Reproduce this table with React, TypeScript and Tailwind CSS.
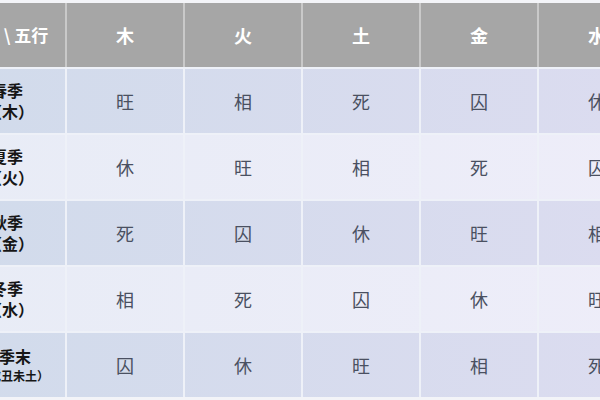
import React from "react";

const cols = ["木", "火", "土", "金", "水"];
const rows: { l1: string; l2: string; small?: boolean; cells: string[] }[] = [
  { l1: "春季", l2: "木", cells: ["旺", "相", "死", "囚", "休"] },
  { l1: "夏季", l2: "火", cells: ["休", "旺", "相", "死", "囚"] },
  { l1: "秋季", l2: "金", cells: ["死", "囚", "休", "旺", "相"] },
  { l1: "冬季", l2: "水", cells: ["相", "死", "囚", "休", "旺"] },
  { l1: "四季末", l2: "辰戌丑未土", small: true, cells: ["囚", "休", "旺", "相", "死"] },
];

export default function App() {
  return (
    <div
      className="w-[600px] h-[400px] overflow-hidden bg-[#f3f4f8] pt-[3px]"
      style={{ fontFamily: '"Noto Sans CJK SC", "Noto Sans", sans-serif' }}
    >
      <div className="ml-[-51px] flex flex-col gap-[2px] w-[720px] bg-[#eef1f8]">
        <div className="flex h-[64px] bg-[#a6a6a6]">
          <div className="w-[118px] border-r-2 border-[#c9c9c9] flex items-center justify-center text-white font-bold text-[17px] whitespace-pre">
            {"季节 \\ 五行"}
          </div>
          {cols.map((c) => (
            <div
              key={c}
              className="w-[118px] border-r-2 border-[#c9c9c9] flex items-center justify-center text-white font-bold text-[18px]"
            >
              {c}
            </div>
          ))}
        </div>
        {rows.map((r, i) => (
          <div
            key={r.l1}
            className={
              "flex h-[64px] " +
              (i % 2 === 0
                ? "bg-gradient-to-r from-[#d1dbeb] to-[#dcdcf0]"
                : "bg-gradient-to-r from-[#e8ecf6] to-[#eeedf9]")
            }
          >
            <div className="w-[118px] border-r-2 border-[#eef1f8] flex flex-col items-center justify-center text-[#161616] font-bold">
              <div className="text-[16px] leading-[21px]">{r.l1}</div>
              <div
                className={
                  r.small
                    ? "flex text-[12px] leading-[17px]"
                    : "flex text-[16px] leading-[21px] pl-[6px]"
                }
              >
                <span className="w-[1em] text-right">（</span>
                <span>{r.l2}</span>
                <span className="w-[1em] text-left">）</span>
              </div>
            </div>
            {r.cells.map((c, j) => (
              <div
                key={j}
                className="w-[118px] border-r-2 border-[#eef1f8] flex items-center justify-center text-[#4a5061] text-[18px]"
              >
                {c}
              </div>
            ))}
          </div>
        ))}
      </div>
    </div>
  );
}
